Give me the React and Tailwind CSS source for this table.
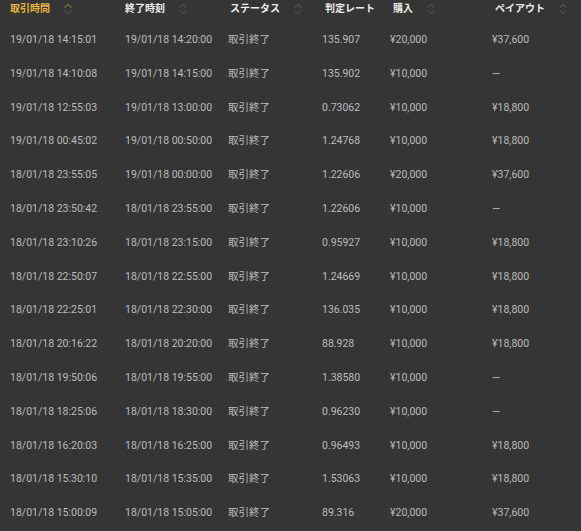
import React from 'react';

const rows = [
  ['19/01/18 14:15:01', '19/01/18 14:20:00', '135.907', '¥20,000', '¥37,600'],
  ['19/01/18 14:10:08', '19/01/18 14:15:00', '135.902', '¥10,000', null],
  ['19/01/18 12:55:03', '19/01/18 13:00:00', '0.73062', '¥10,000', '¥18,800'],
  ['19/01/18 00:45:02', '19/01/18 00:50:00', '1.24768', '¥10,000', '¥18,800'],
  ['18/01/18 23:55:05', '19/01/18 00:00:00', '1.22606', '¥20,000', '¥37,600'],
  ['18/01/18 23:50:42', '18/01/18 23:55:00', '1.22606', '¥10,000', null],
  ['18/01/18 23:10:26', '18/01/18 23:15:00', '0.95927', '¥10,000', '¥18,800'],
  ['18/01/18 22:50:07', '18/01/18 22:55:00', '1.24669', '¥10,000', '¥18,800'],
  ['18/01/18 22:25:01', '18/01/18 22:30:00', '136.035', '¥10,000', '¥18,800'],
  ['18/01/18 20:16:22', '18/01/18 20:20:00', '88.928', '¥10,000', '¥18,800'],
  ['18/01/18 19:50:06', '18/01/18 19:55:00', '1.38580', '¥10,000', null],
  ['18/01/18 18:25:06', '18/01/18 18:30:00', '0.96230', '¥10,000', null],
  ['18/01/18 16:20:03', '18/01/18 16:25:00', '0.96493', '¥10,000', '¥18,800'],
  ['18/01/18 15:30:10', '18/01/18 15:35:00', '1.53063', '¥10,000', '¥18,800'],
  ['18/01/18 15:00:09', '18/01/18 15:05:00', '89.316', '¥20,000', '¥37,600'],
];

function SortIcon({ active }) {
  return (
    <svg width="10" height="12" viewBox="0 0 10 12" className="ml-[13px] shrink-0">
      <path d="M1.5 4.5 L5 1.5 L8.5 4.5" fill="none" stroke={active ? '#7d7250' : '#4f4f4f'} strokeWidth="1.3" />
      <path d="M1.5 7.5 L5 10.5 L8.5 7.5" fill="none" stroke="#4a4a4a" strokeWidth="1.3" />
    </svg>
  );
}

const cols = ['w-[115px]', 'w-[103px]', 'w-[94px]', 'w-[68px]', 'w-[102px]', 'flex-1'];

export default function App() {
  return (
    <div
      className="w-[581px] h-[531px] overflow-hidden bg-[#353535] text-[#bcbcbc]"
      style={{ fontFamily: 'Roboto, "Noto Sans CJK JP", sans-serif' }}
    >
      <div className="flex h-[17px] items-center mb-[6px] text-[10px] font-bold text-[#ececec]">
        <div className={`${cols[0]} flex items-center pl-[10px] text-[#e9b43c]`}>取引時間<SortIcon active /></div>
        <div className={`${cols[1]} flex items-center pl-[10px]`}>終了時刻<SortIcon /></div>
        <div className={`${cols[2]} flex items-center pl-[12px]`}>ステータス<SortIcon /></div>
        <div className={`${cols[3]} flex items-center pl-[13px]`}>判定レート</div>
        <div className={`${cols[4]} flex items-center pl-[13px]`}>購入<SortIcon /></div>
        <div className={`${cols[5]} flex items-center pl-[13px]`}>ペイアウト<SortIcon /></div>
      </div>
      {rows.map((r, i) => (
        <div key={i} className="flex h-[33.8px] items-center text-[10.5px]">
          <div className={`${cols[0]} pl-[10px]`}>{r[0]}</div>
          <div className={`${cols[1]} pl-[10px]`}>{r[1]}</div>
          <div className={`${cols[2]} pl-[10px]`}>取引終了</div>
          <div className={`${cols[3]} pl-[10px]`}>{r[2]}</div>
          <div className={`${cols[4]} pl-[10px]`}>{r[3]}</div>
          <div className={`${cols[5]} pl-[10px]`}>{r[4] || '—'}</div>
        </div>
      ))}
    </div>
  );
}
